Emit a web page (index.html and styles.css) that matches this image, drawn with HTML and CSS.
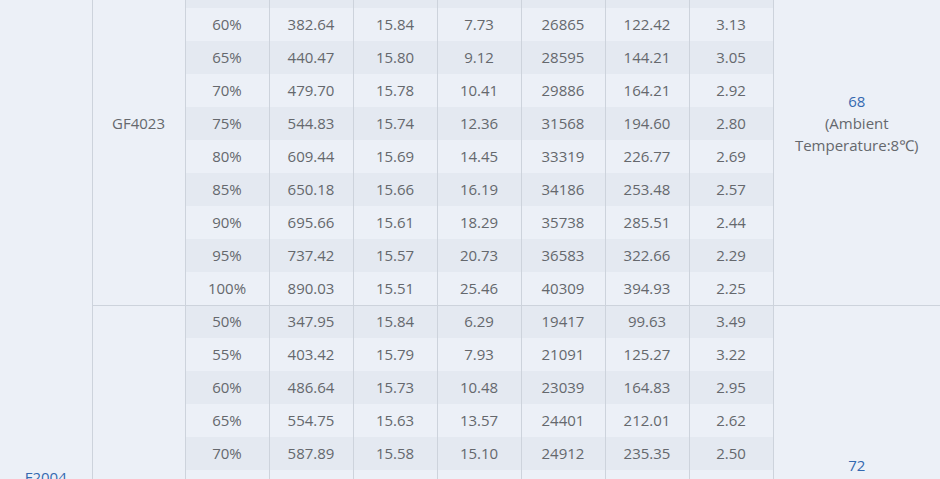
FILE: index.html
```html
<!DOCTYPE html>
<html lang="en">
<head>
<meta charset="utf-8">
<title>Fan performance table</title>
<link rel="stylesheet" href="styles.css">
</head>
<body>
<div class="wrap">
<table class="perf">
  <colgroup>
    <col class="c-series"><col class="c-model">
    <col class="c-d"><col class="c-d"><col class="c-d"><col class="c-d"><col class="c-d"><col class="c-d"><col class="c-d">
    <col class="c-temp">
  </colgroup>
  <tbody>
    <tr>
      <td class="series" rowspan="33"><span class="blue">F2004</span></td>
      <td class="model" rowspan="11">GF4023</td>
      <td class="d">50%</td><td class="d">290.12</td><td class="d">15.90</td><td class="d">5.10</td><td class="d">22345</td><td class="d">90.05</td><td class="d">3.45</td>
      <td class="temp" rowspan="11"><span class="blue">68</span><br>(Ambient Temperature:8℃)</td>
    </tr>
    <tr><td class="d">55%</td><td class="d">335.40</td><td class="d">15.87</td><td class="d">6.31</td><td class="d">24620</td><td class="d">105.32</td><td class="d">3.28</td></tr>
    <tr><td class="d">60%</td><td class="d">382.64</td><td class="d">15.84</td><td class="d">7.73</td><td class="d">26865</td><td class="d">122.42</td><td class="d">3.13</td></tr>
    <tr><td class="d">65%</td><td class="d">440.47</td><td class="d">15.80</td><td class="d">9.12</td><td class="d">28595</td><td class="d">144.21</td><td class="d">3.05</td></tr>
    <tr><td class="d">70%</td><td class="d">479.70</td><td class="d">15.78</td><td class="d">10.41</td><td class="d">29886</td><td class="d">164.21</td><td class="d">2.92</td></tr>
    <tr><td class="d">75%</td><td class="d">544.83</td><td class="d">15.74</td><td class="d">12.36</td><td class="d">31568</td><td class="d">194.60</td><td class="d">2.80</td></tr>
    <tr><td class="d">80%</td><td class="d">609.44</td><td class="d">15.69</td><td class="d">14.45</td><td class="d">33319</td><td class="d">226.77</td><td class="d">2.69</td></tr>
    <tr><td class="d">85%</td><td class="d">650.18</td><td class="d">15.66</td><td class="d">16.19</td><td class="d">34186</td><td class="d">253.48</td><td class="d">2.57</td></tr>
    <tr><td class="d">90%</td><td class="d">695.66</td><td class="d">15.61</td><td class="d">18.29</td><td class="d">35738</td><td class="d">285.51</td><td class="d">2.44</td></tr>
    <tr><td class="d">95%</td><td class="d">737.42</td><td class="d">15.57</td><td class="d">20.73</td><td class="d">36583</td><td class="d">322.66</td><td class="d">2.29</td></tr>
    <tr><td class="d">100%</td><td class="d">890.03</td><td class="d">15.51</td><td class="d">25.46</td><td class="d">40309</td><td class="d">394.93</td><td class="d">2.25</td></tr>

    <tr class="gstart">
      <td class="model" rowspan="11">GF4024</td>
      <td class="d">50%</td><td class="d">347.95</td><td class="d">15.84</td><td class="d">6.29</td><td class="d">19417</td><td class="d">99.63</td><td class="d">3.49</td>
      <td class="temp" rowspan="11"><span class="blue">72</span><br>(Ambient Temperature:8℃)</td>
    </tr>
    <tr><td class="d">55%</td><td class="d">403.42</td><td class="d">15.79</td><td class="d">7.93</td><td class="d">21091</td><td class="d">125.27</td><td class="d">3.22</td></tr>
    <tr><td class="d">60%</td><td class="d">486.64</td><td class="d">15.73</td><td class="d">10.48</td><td class="d">23039</td><td class="d">164.83</td><td class="d">2.95</td></tr>
    <tr><td class="d">65%</td><td class="d">554.75</td><td class="d">15.63</td><td class="d">13.57</td><td class="d">24401</td><td class="d">212.01</td><td class="d">2.62</td></tr>
    <tr><td class="d">70%</td><td class="d">587.89</td><td class="d">15.58</td><td class="d">15.10</td><td class="d">24912</td><td class="d">235.35</td><td class="d">2.50</td></tr>
    <tr><td class="d">75%</td><td class="d">641.20</td><td class="d">15.52</td><td class="d">17.66</td><td class="d">25873</td><td class="d">268.14</td><td class="d">2.38</td></tr>
    <tr><td class="d">80%</td><td class="d">702.36</td><td class="d">15.47</td><td class="d">20.31</td><td class="d">26954</td><td class="d">301.72</td><td class="d">2.27</td></tr>
    <tr><td class="d">85%</td><td class="d">758.91</td><td class="d">15.41</td><td class="d">23.05</td><td class="d">27840</td><td class="d">336.58</td><td class="d">2.17</td></tr>
    <tr><td class="d">90%</td><td class="d">812.47</td><td class="d">15.36</td><td class="d">25.92</td><td class="d">28716</td><td class="d">372.40</td><td class="d">2.08</td></tr>
    <tr><td class="d">95%</td><td class="d">866.13</td><td class="d">15.30</td><td class="d">28.84</td><td class="d">29485</td><td class="d">409.95</td><td class="d">2.00</td></tr>
    <tr><td class="d">100%</td><td class="d">921.58</td><td class="d">15.24</td><td class="d">31.97</td><td class="d">30261</td><td class="d">449.12</td><td class="d">1.93</td></tr>

    <tr class="gstart">
      <td class="model" rowspan="11">GF4025</td>
      <td class="d">50%</td><td class="d">372.16</td><td class="d">15.82</td><td class="d">6.84</td><td class="d">20536</td><td class="d">108.27</td><td class="d">3.41</td>
      <td class="temp" rowspan="11"><span class="blue">75</span><br>(Ambient Temperature:8℃)</td>
    </tr>
    <tr><td class="d">55%</td><td class="d">431.08</td><td class="d">15.77</td><td class="d">8.62</td><td class="d">22318</td><td class="d">136.45</td><td class="d">3.15</td></tr>
    <tr><td class="d">60%</td><td class="d">510.33</td><td class="d">15.70</td><td class="d">11.27</td><td class="d">24107</td><td class="d">178.91</td><td class="d">2.87</td></tr>
    <tr><td class="d">65%</td><td class="d">579.62</td><td class="d">15.61</td><td class="d">14.38</td><td class="d">25342</td><td class="d">224.86</td><td class="d">2.58</td></tr>
    <tr><td class="d">70%</td><td class="d">618.45</td><td class="d">15.55</td><td class="d">16.22</td><td class="d">25990</td><td class="d">252.13</td><td class="d">2.45</td></tr>
    <tr><td class="d">75%</td><td class="d">672.81</td><td class="d">15.49</td><td class="d">18.94</td><td class="d">26811</td><td class="d">287.40</td><td class="d">2.34</td></tr>
    <tr><td class="d">80%</td><td class="d">735.19</td><td class="d">15.43</td><td class="d">21.76</td><td class="d">27905</td><td class="d">323.58</td><td class="d">2.23</td></tr>
    <tr><td class="d">85%</td><td class="d">791.64</td><td class="d">15.38</td><td class="d">24.63</td><td class="d">28752</td><td class="d">360.17</td><td class="d">2.13</td></tr>
    <tr><td class="d">90%</td><td class="d">846.02</td><td class="d">15.32</td><td class="d">27.58</td><td class="d">29640</td><td class="d">398.45</td><td class="d">2.04</td></tr>
    <tr><td class="d">95%</td><td class="d">899.37</td><td class="d">15.26</td><td class="d">30.61</td><td class="d">30418</td><td class="d">437.89</td><td class="d">1.96</td></tr>
    <tr><td class="d">100%</td><td class="d">953.80</td><td class="d">15.20</td><td class="d">33.85</td><td class="d">31207</td><td class="d">478.26</td><td class="d">1.89</td></tr>
  </tbody>
</table>
</div>
</body>
</html>
```

FILE: styles.css
```css
html, body {
  margin: 0;
  padding: 0;
  overflow: hidden;
  background: #ecf0f7;
}

.wrap {
  width: 940px;
  height: 479px;
  overflow: hidden;
}

.perf {
  width: 940px;
  margin-top: -58px;
  border-collapse: collapse;
  table-layout: fixed;
  font-family: "Open Sans", "Noto Sans", "DejaVu Sans", sans-serif;
  font-size: 15px;
  color: #65686d;
  background: #ecf0f7;
}

.c-series { width: 92px; }
.c-model { width: 93px; }
.c-d { width: 84px; }
.c-temp { width: 167px; }

.perf td {
  height: 33px;
  padding: 0;
  text-align: center;
  vertical-align: middle;
  border-left: 1px solid #cdd3dc;
  line-height: 22px;
  box-sizing: border-box;
}

.perf td.d {
  padding-bottom: 1px;
}

.perf td.series {
  border-left: 0;
  padding-bottom: 20px;
}

.perf tr:nth-child(even) td.d {
  background: #e4e9f1;
}

.perf tr.gstart td {
  border-top: 1px solid #cdd3dc;
}

.perf td.temp {
  padding: 0 6px;
}

.blue {
  color: #3469b0;
}
```
